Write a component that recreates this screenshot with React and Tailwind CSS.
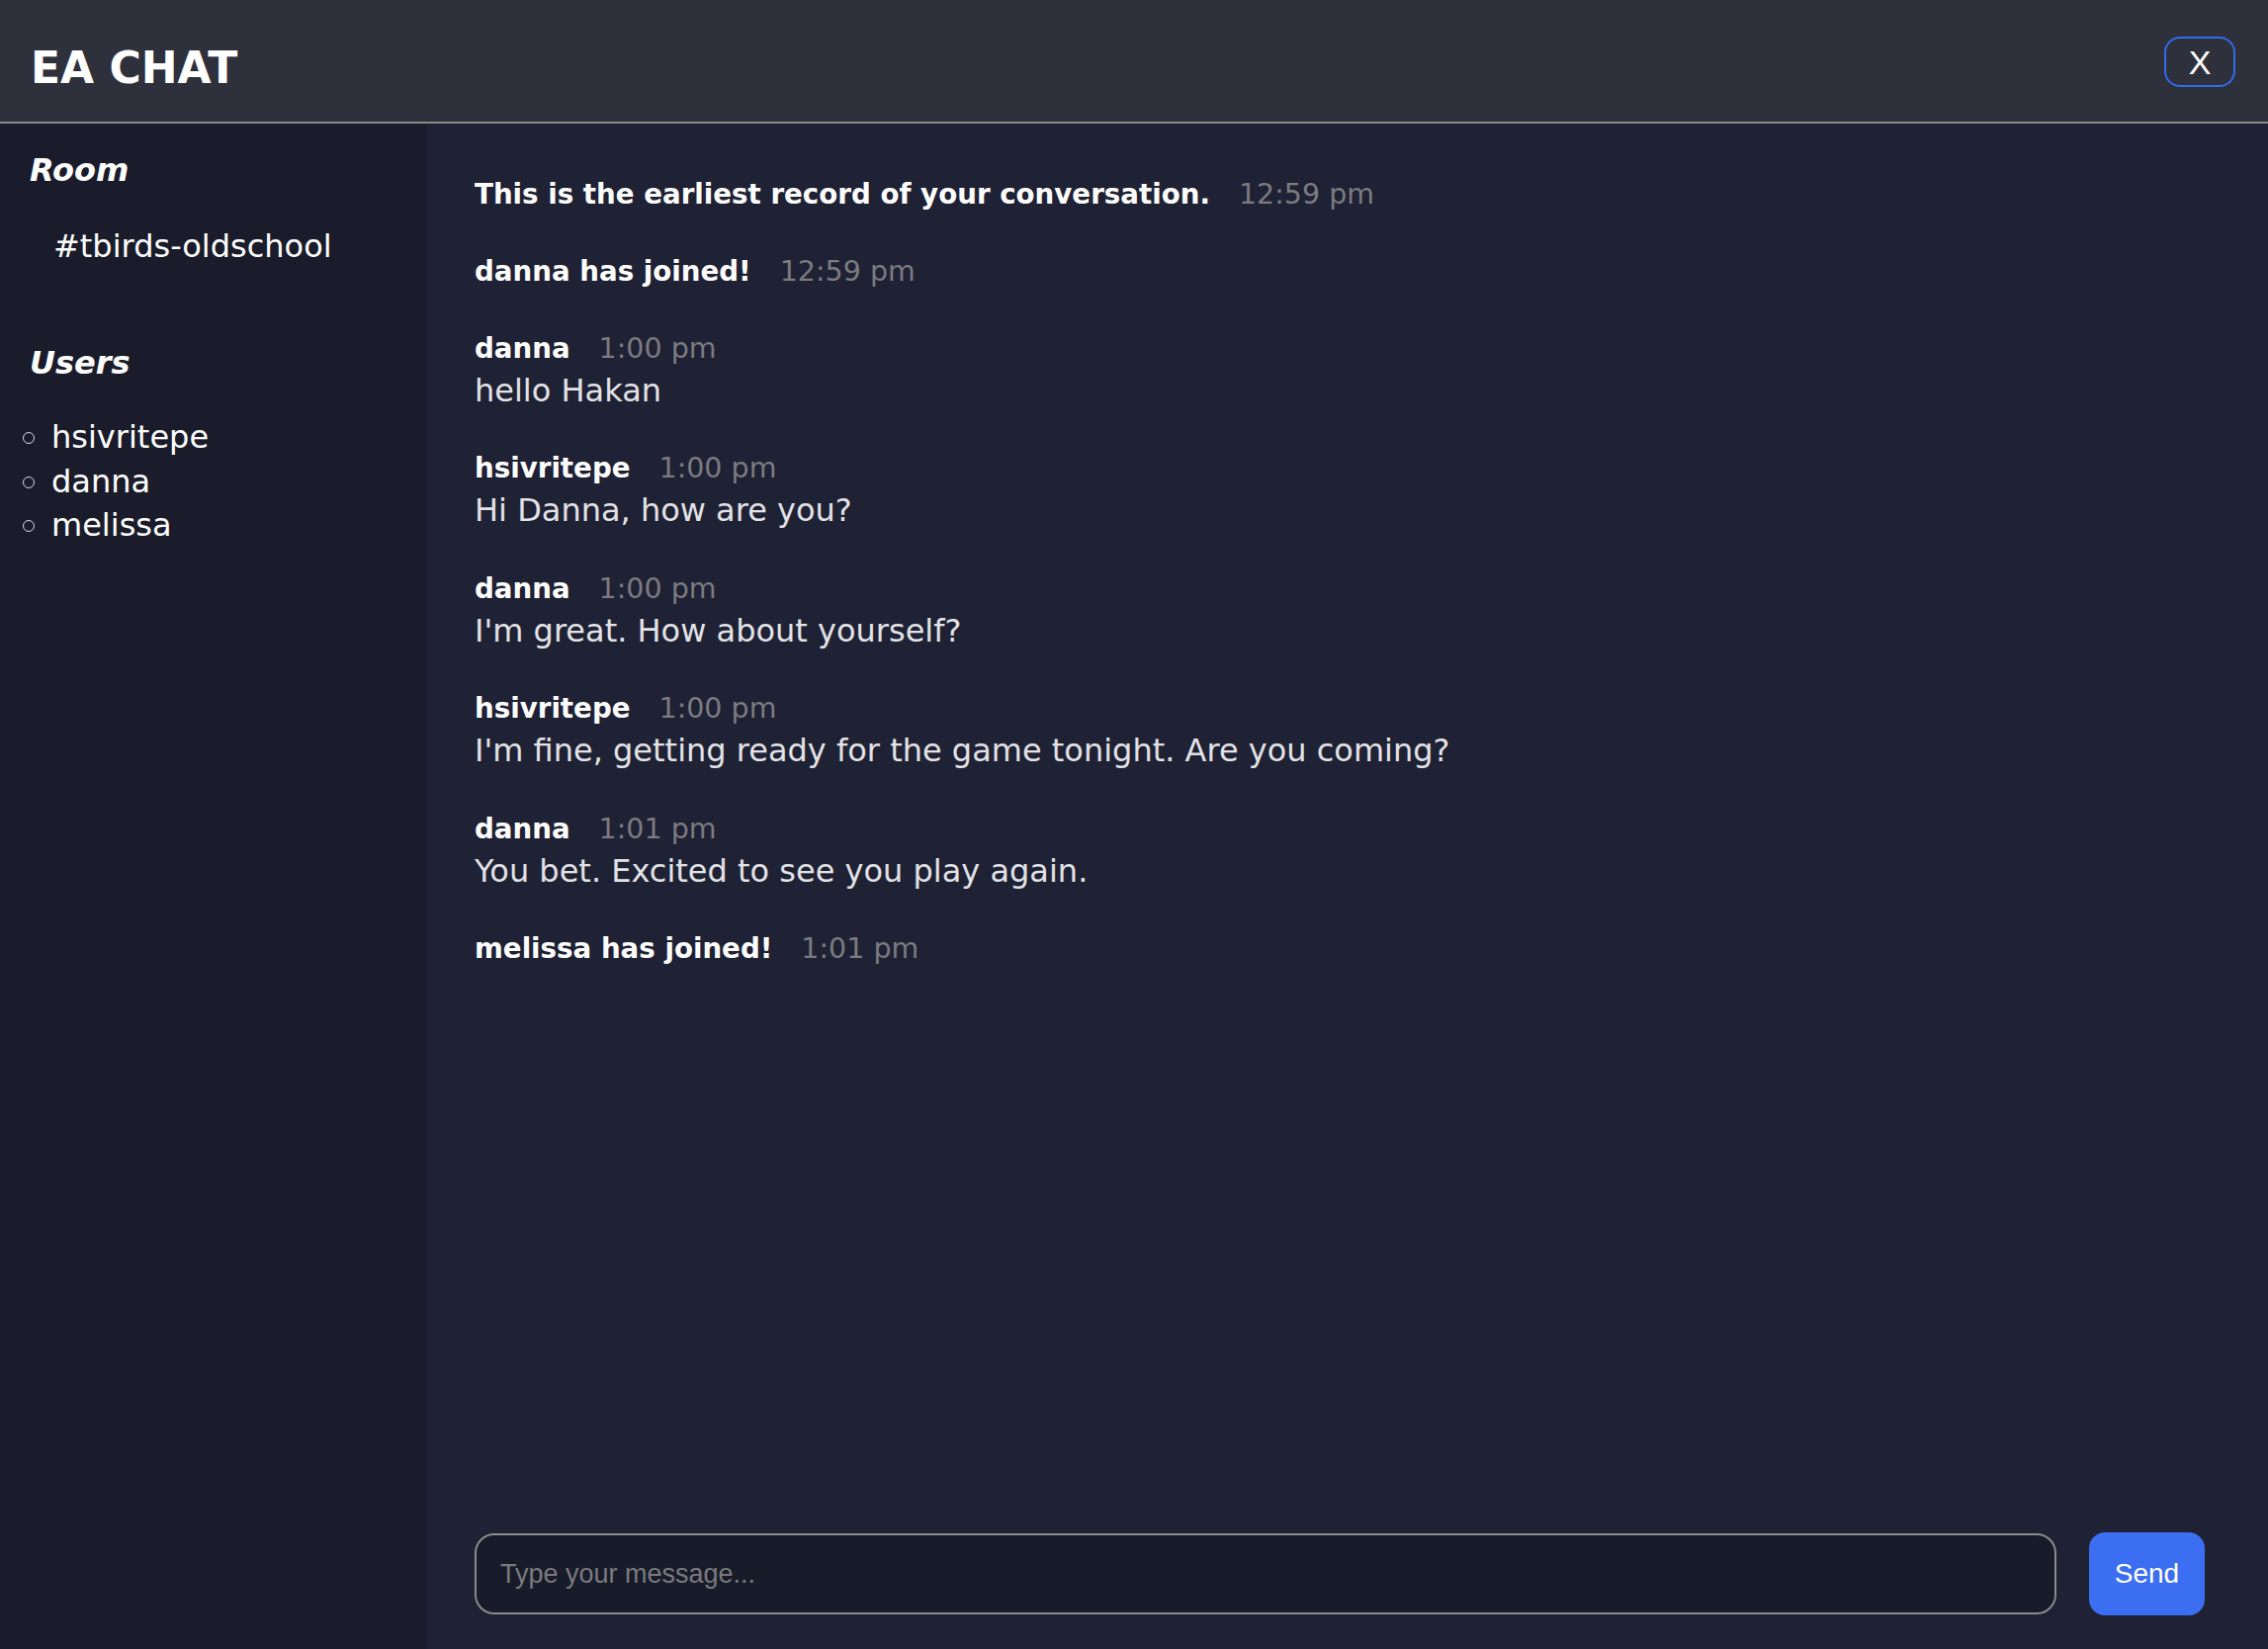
import React from "react";

const USERS = ["hsivritepe", "danna", "melissa"];

const MESSAGES = [
  { system: true, text: "This is the earliest record of your conversation.", time: "12:59 pm" },
  { system: true, text: "danna has joined!", time: "12:59 pm" },
  { name: "danna", time: "1:00 pm", text: "hello Hakan" },
  { name: "hsivritepe", time: "1:00 pm", text: "Hi Danna, how are you?" },
  { name: "danna", time: "1:00 pm", text: "I'm great. How about yourself?" },
  { name: "hsivritepe", time: "1:00 pm", text: "I'm fine, getting ready for the game tonight. Are you coming?" },
  { name: "danna", time: "1:01 pm", text: "You bet. Excited to see you play again." },
  { system: true, text: "melissa has joined!", time: "1:01 pm" },
];

function Message({ msg }) {
  return (
    <div className="mb-[34px]">
      <div className="flex items-baseline leading-[44px]">
        <span className="text-[27.7px] font-bold text-white">
          {msg.system ? msg.text : msg.name}
        </span>
        <span className="ml-[29px] text-[28.5px] text-[#7b7b80]">{msg.time}</span>
      </div>
      {!msg.system && (
        <p className="-mt-[2px] pb-[1.4px] text-[32px] leading-[44px] text-[#e2e2e6]">{msg.text}</p>
      )}
    </div>
  );
}

export default function App() {
  return (
    <div className="flex h-screen flex-col overflow-hidden bg-[#1f2134] font-['DejaVu_Sans',Verdana,sans-serif] text-white">
      <header className="flex h-[125px] shrink-0 items-center justify-between border-b-2 border-[#8a8a8a] bg-[#2e303c] pl-[31px] pr-[33px]">
        <h1 className="mt-[15px] text-[44px] font-bold leading-none">EA CHAT</h1>
        <button
          type="button"
          aria-label="Close"
          className="mt-[2px] flex h-[51px] w-[72px] items-center justify-center rounded-[16px] border-2 border-[#2f6bec] font-['Liberation_Sans',Arial,sans-serif] text-[34px] leading-none text-white"
        >
          X
        </button>
      </header>

      <div className="flex min-h-0 flex-1">
        <aside className="w-[432px] shrink-0 bg-[#1a1c2b] pt-[27px]">
          <h2 className="pl-[30px] text-[32px] font-bold italic leading-[40px]">Room</h2>
          <p className="mt-[35px] pl-[54px] text-[32px] leading-[44px]">#tbirds-oldschool</p>

          <h2 className="mt-[76px] pl-[30px] text-[32px] font-bold italic leading-[40px]">Users</h2>
          <ul className="mt-[33px]">
            {USERS.map((u) => (
              <li key={u} className="flex items-center text-[32px] leading-[44.5px]">
                <span className="ml-[23px] mr-[17px] mt-[2px] h-[12px] w-[12px] rounded-full border-[1.5px] border-[#d8d8dc]" />
                {u}
              </li>
            ))}
          </ul>
        </aside>

        <main className="flex min-w-0 flex-1 flex-col">
          <div className="flex-1 overflow-hidden pl-[48px] pr-[64px] pt-[50px]">
            {MESSAGES.map((m, i) => (
              <Message key={i} msg={m} />
            ))}
          </div>

          <div className="flex items-center gap-[33px] pb-[34px] pl-[48px] pr-[64px]">
            <input
              type="text"
              placeholder="Type your message..."
              className="h-[82px] flex-1 rounded-[20px] border-2 border-[#8a8a8a] bg-[#181b29] pl-[24px] font-['Liberation_Sans',Arial,sans-serif] text-[27px] text-white outline-none placeholder:text-[#7a7a7e]"
            />
            <button
              type="button"
              className="h-[84px] w-[117px] rounded-[16px] bg-[#3b6ef1] font-['Liberation_Sans',Arial,sans-serif] text-[28px] text-white"
            >
              Send
            </button>
          </div>
        </main>
      </div>
    </div>
  );
}
